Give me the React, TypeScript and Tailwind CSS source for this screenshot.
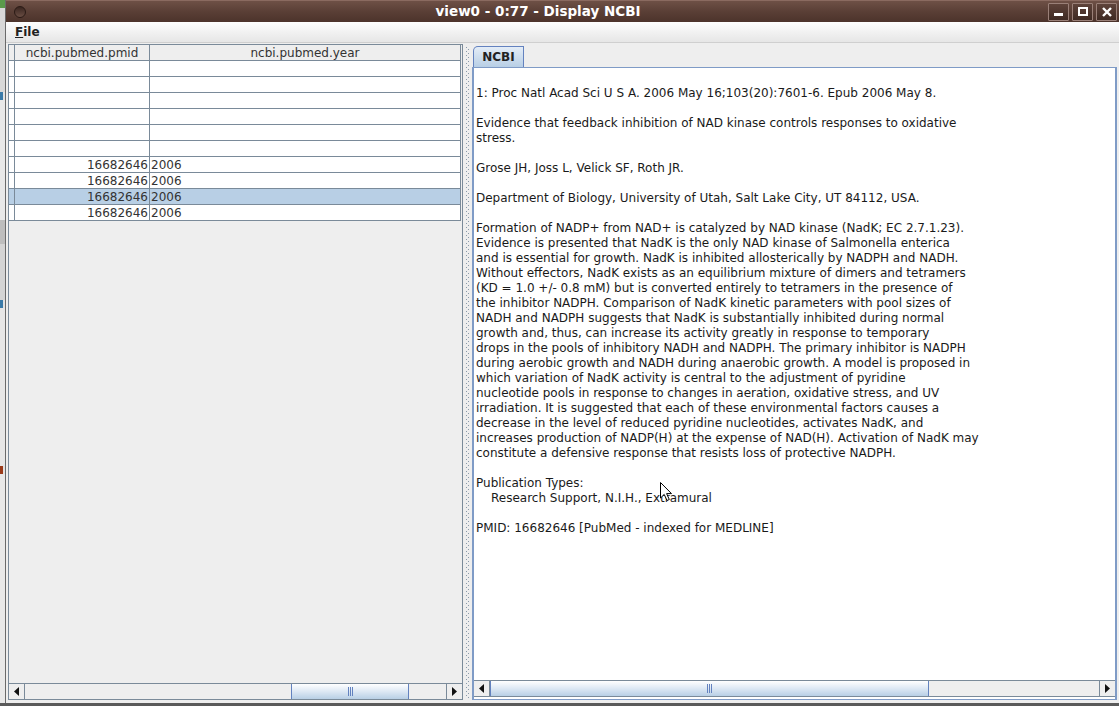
import React from "react";

const lines: string[] = [
  "1: Proc Natl Acad Sci U S A. 2006 May 16;103(20):7601-6. Epub 2006 May 8.",
  "",
  "Evidence that feedback inhibition of NAD kinase controls responses to oxidative",
  "stress.",
  "",
  "Grose JH, Joss L, Velick SF, Roth JR.",
  "",
  "Department of Biology, University of Utah, Salt Lake City, UT 84112, USA.",
  "",
  "Formation of NADP+ from NAD+ is catalyzed by NAD kinase (NadK; EC 2.7.1.23).",
  "Evidence is presented that NadK is the only NAD kinase of Salmonella enterica",
  "and is essential for growth. NadK is inhibited allosterically by NADPH and NADH.",
  "Without effectors, NadK exists as an equilibrium mixture of dimers and tetramers",
  "(KD = 1.0 +/- 0.8 mM) but is converted entirely to tetramers in the presence of",
  "the inhibitor NADPH. Comparison of NadK kinetic parameters with pool sizes of",
  "NADH and NADPH suggests that NadK is substantially inhibited during normal",
  "growth and, thus, can increase its activity greatly in response to temporary",
  "drops in the pools of inhibitory NADH and NADPH. The primary inhibitor is NADPH",
  "during aerobic growth and NADH during anaerobic growth. A model is proposed in",
  "which variation of NadK activity is central to the adjustment of pyridine",
  "nucleotide pools in response to changes in aeration, oxidative stress, and UV",
  "irradiation. It is suggested that each of these environmental factors causes a",
  "decrease in the level of reduced pyridine nucleotides, activates NadK, and",
  "increases production of NADP(H) at the expense of NAD(H). Activation of NadK may",
  "constitute a defensive response that resists loss of protective NADPH.",
  "",
  "Publication Types:",
  "INDENT:Research Support, N.I.H., Extramural",
  "",
  "PMID: 16682646 [PubMed - indexed for MEDLINE]",
];

const rows: { pmid: string; year: string; sel?: boolean }[] = [
  { pmid: "", year: "" },
  { pmid: "", year: "" },
  { pmid: "", year: "" },
  { pmid: "", year: "" },
  { pmid: "", year: "" },
  { pmid: "", year: "" },
  { pmid: "16682646", year: "2006" },
  { pmid: "16682646", year: "2006" },
  { pmid: "16682646", year: "2006", sel: true },
  { pmid: "16682646", year: "2006" },
];

function HScroll({ before, thumb }: { before: number; thumb: number }) {
  return (
    <div className="h-[16px] flex border-t border-[#7a8a99] bg-[#eeeeee] shrink-0">
      <div className="w-[16px] h-full flex items-center justify-center border-r border-[#7a8a99] bg-[#eeeeee] shrink-0">
        <svg width="5" height="9" viewBox="0 0 5 9">
          <polygon points="5,0 0,4.5 5,9" fill="#111" />
        </svg>
      </div>
      <div className="flex-1 flex h-full bg-[#eeeeee]">
        <div style={{ width: before }} className="shrink-0" />
        <div
          style={{ width: thumb }}
          className="shrink-0 h-full border-x border-[#6382bf] bg-gradient-to-b from-[#ffffff] via-[#dde8f4] to-[#b8cfe5] flex items-center justify-center"
        >
          <div className="flex gap-[1px] h-[9px]">
            <div className="w-[1px] h-full bg-[#6382bf]" />
            <div className="w-[1px] h-full bg-[#6382bf]" />
            <div className="w-[1px] h-full bg-[#6382bf]" />
          </div>
        </div>
      </div>
      <div className="w-[16px] h-full flex items-center justify-center border-l border-[#7a8a99] bg-[#eeeeee] shrink-0">
        <svg width="5" height="9" viewBox="0 0 5 9">
          <polygon points="0,0 5,4.5 0,9" fill="#111" />
        </svg>
      </div>
    </div>
  );
}

function WinButton({ kind }: { kind: "min" | "max" | "close" }) {
  return (
    <div className="w-[21px] h-[18px] border border-[#9a8078] bg-gradient-to-b from-[#5e433a] to-[#3f2a23] flex items-center justify-center rounded-[1px]">
      {kind === "min" && <div className="w-[9px] h-[3px] bg-white mt-[6px]" />}
      {kind === "max" && <div className="w-[10px] h-[9px] border-2 border-white" />}
      {kind === "close" && (
        <svg width="10" height="10" viewBox="0 0 10 10">
          <path d="M1 1 L9 9 M9 1 L1 9" stroke="white" strokeWidth="2.4" />
        </svg>
      )}
    </div>
  );
}

export default function App() {
  return (
    <div className="relative w-[1119px] h-[706px] flex flex-col overflow-hidden bg-[#8c8c8c] font-['DejaVu_Sans',sans-serif]">
      <div className="flex flex-1 min-h-0">
        {/* desktop strip */}
        <div className="w-[5px] shrink-0 flex flex-col bg-[#e2e2e2]">
          <div className="h-[8px] bg-[#5a9a4a]" />
          <div className="h-[84px] bg-[#d8d8d8]" />
          <div className="h-[8px] w-[3px] bg-[#3a7aa8]" />
          <div className="h-[120px] bg-[#e8e8e8]" />
          <div className="h-[24px] bg-[#bdbdbd]" />
          <div className="h-[56px] bg-[#d4d4d4]" />
          <div className="h-[8px] w-[3px] bg-[#3a7aa8]" />
          <div className="h-[158px] bg-[#e6e6e6]" />
          <div className="h-[8px] w-[3px] bg-[#9a3a1a]" />
          <div className="flex-1 bg-[#e8e8e8]" />
        </div>
        {/* window */}
        <div className="flex-1 flex flex-col border-l border-[#6a6a6a] bg-[#eeeeee] min-w-0">
          {/* title bar */}
          <div className="h-[22px] shrink-0 flex items-center bg-gradient-to-b from-[#6e5046] via-[#5a3f36] to-[#4c332b] border-t border-[#8a6a60]">
            <div className="w-[12px] h-[12px] rounded-full border border-[#2a1a15] bg-gradient-to-b from-[#3a2620] to-[#6a4e44] ml-[8px] shrink-0" />
            <div className="flex-1 text-center text-white font-bold text-[13.5px] leading-none pl-[2px]">
              view0 - 0:77 - Display NCBI
            </div>
            <div className="flex gap-[3px] mr-[2px]">
              <WinButton kind="min" />
              <WinButton kind="max" />
              <WinButton kind="close" />
            </div>
          </div>
          {/* menu bar */}
          <div className="h-[21px] shrink-0 flex items-center bg-gradient-to-b from-[#fdfdfd] to-[#e6e6e6] border-b border-[#cfcfcf]">
            <span className="ml-[9px] text-[12px] font-bold text-[#222]">
              <span className="underline">F</span>ile
            </span>
          </div>
          {/* content */}
          <div className="flex-1 flex min-h-0 pl-[2px] pr-[2px] pb-[3px] pt-[1px]">
            {/* left panel */}
            <div className="w-[455px] shrink-0 flex flex-col border border-[#7a8a99] bg-[#eeeeee]">
              <div className="flex-1 min-h-0 flex flex-col text-[12px] text-[#333]">
                {/* header */}
                <div className="h-[16px] flex border-b border-[#7a8a99] bg-[#eeeeee] shrink-0 mr-[1px]">
                  <div className="w-[6px] border-r border-[#7a8a99]" />
                  <div className="w-[135px] border-r border-[#7a8a99] flex items-center justify-center leading-none">
                    ncbi.pubmed.pmid
                  </div>
                  <div className="flex-1 border-r border-[#7a8a99] flex items-center justify-center leading-none">
                    ncbi.pubmed.year
                  </div>
                </div>
                {rows.map((r, i) => (
                  <div
                    key={i}
                    className={`h-[16px] flex border-b border-[#7a8a99] shrink-0 mr-[1px] ${r.sel ? "bg-[#b8cfe5]" : "bg-white"}`}
                  >
                    <div className="w-[6px] border-r border-[#7a8a99]" />
                    <div className="w-[135px] border-r border-[#7a8a99] flex items-center justify-end pr-[1px] leading-none">
                      {r.pmid}
                    </div>
                    <div className="flex-1 border-r border-[#7a8a99] flex items-center pl-[1px] leading-none">
                      {r.year}
                    </div>
                  </div>
                ))}
              </div>
              <HScroll before={266} thumb={118} />
            </div>
            {/* divider */}
            <div className="w-[9px] shrink-0 flex justify-center pt-[3px] pb-[3px] gap-[1px]">
              <div className="w-[1px] h-full bg-[repeating-linear-gradient(to_bottom,#8a9aaa_0px,#8a9aaa_1px,transparent_1px,transparent_4px)]" />
              <div className="w-[1px] h-full mt-[2px] bg-[repeating-linear-gradient(to_bottom,#8a9aaa_0px,#8a9aaa_1px,transparent_1px,transparent_4px)]" />
            </div>
            {/* right panel */}
            <div className="flex-1 min-w-0 flex flex-col">
              <div className="h-[23px] shrink-0 flex items-end pl-[1px]">
                <div className="w-[51px] h-[21px] border border-b-0 border-[#6382bf] rounded-tl-[5px] bg-gradient-to-b from-[#e4edf7] to-[#b8cfe5] flex items-center justify-center text-[12px] font-bold text-[#222] leading-none">
                  NCBI
                </div>
              </div>
              <div className="flex-1 min-h-0 flex flex-col border-x-[2px] border-b border-t border-[#7f9bc6] bg-white">
                <div className="flex-1 min-h-0 pt-[18px] pl-[2px] text-[12px] text-[#1a1a1a] overflow-hidden">
                  {lines.map((l, i) => (
                    <div key={i} className="h-[15px] leading-[15px] whitespace-pre">
                      {l.startsWith("INDENT:") ? (
                        <span className="pl-[15px]">{l.slice(7)}</span>
                      ) : (
                        l || "\u00a0"
                      )}
                    </div>
                  ))}
                </div>
                <div className="mb-[2px] border-b border-[#7a8a99]">
                  <HScroll before={0} thumb={439} />
                </div>
              </div>
            </div>
          </div>
        </div>
      </div>
      <div className="h-[3px] shrink-0 bg-[#5a5a5a]" />
      {/* mouse cursor */}
      <svg className="absolute left-[660px] top-[482px]" width="13" height="20" viewBox="0 0 13 20">
        <path d="M0.5 0.5 L0.5 16 L4.2 12.4 L7 18.5 L9.3 17.5 L6.6 11.6 L11.5 11.6 Z" fill="white" stroke="black" strokeWidth="1" />
      </svg>
    </div>
  );
}
